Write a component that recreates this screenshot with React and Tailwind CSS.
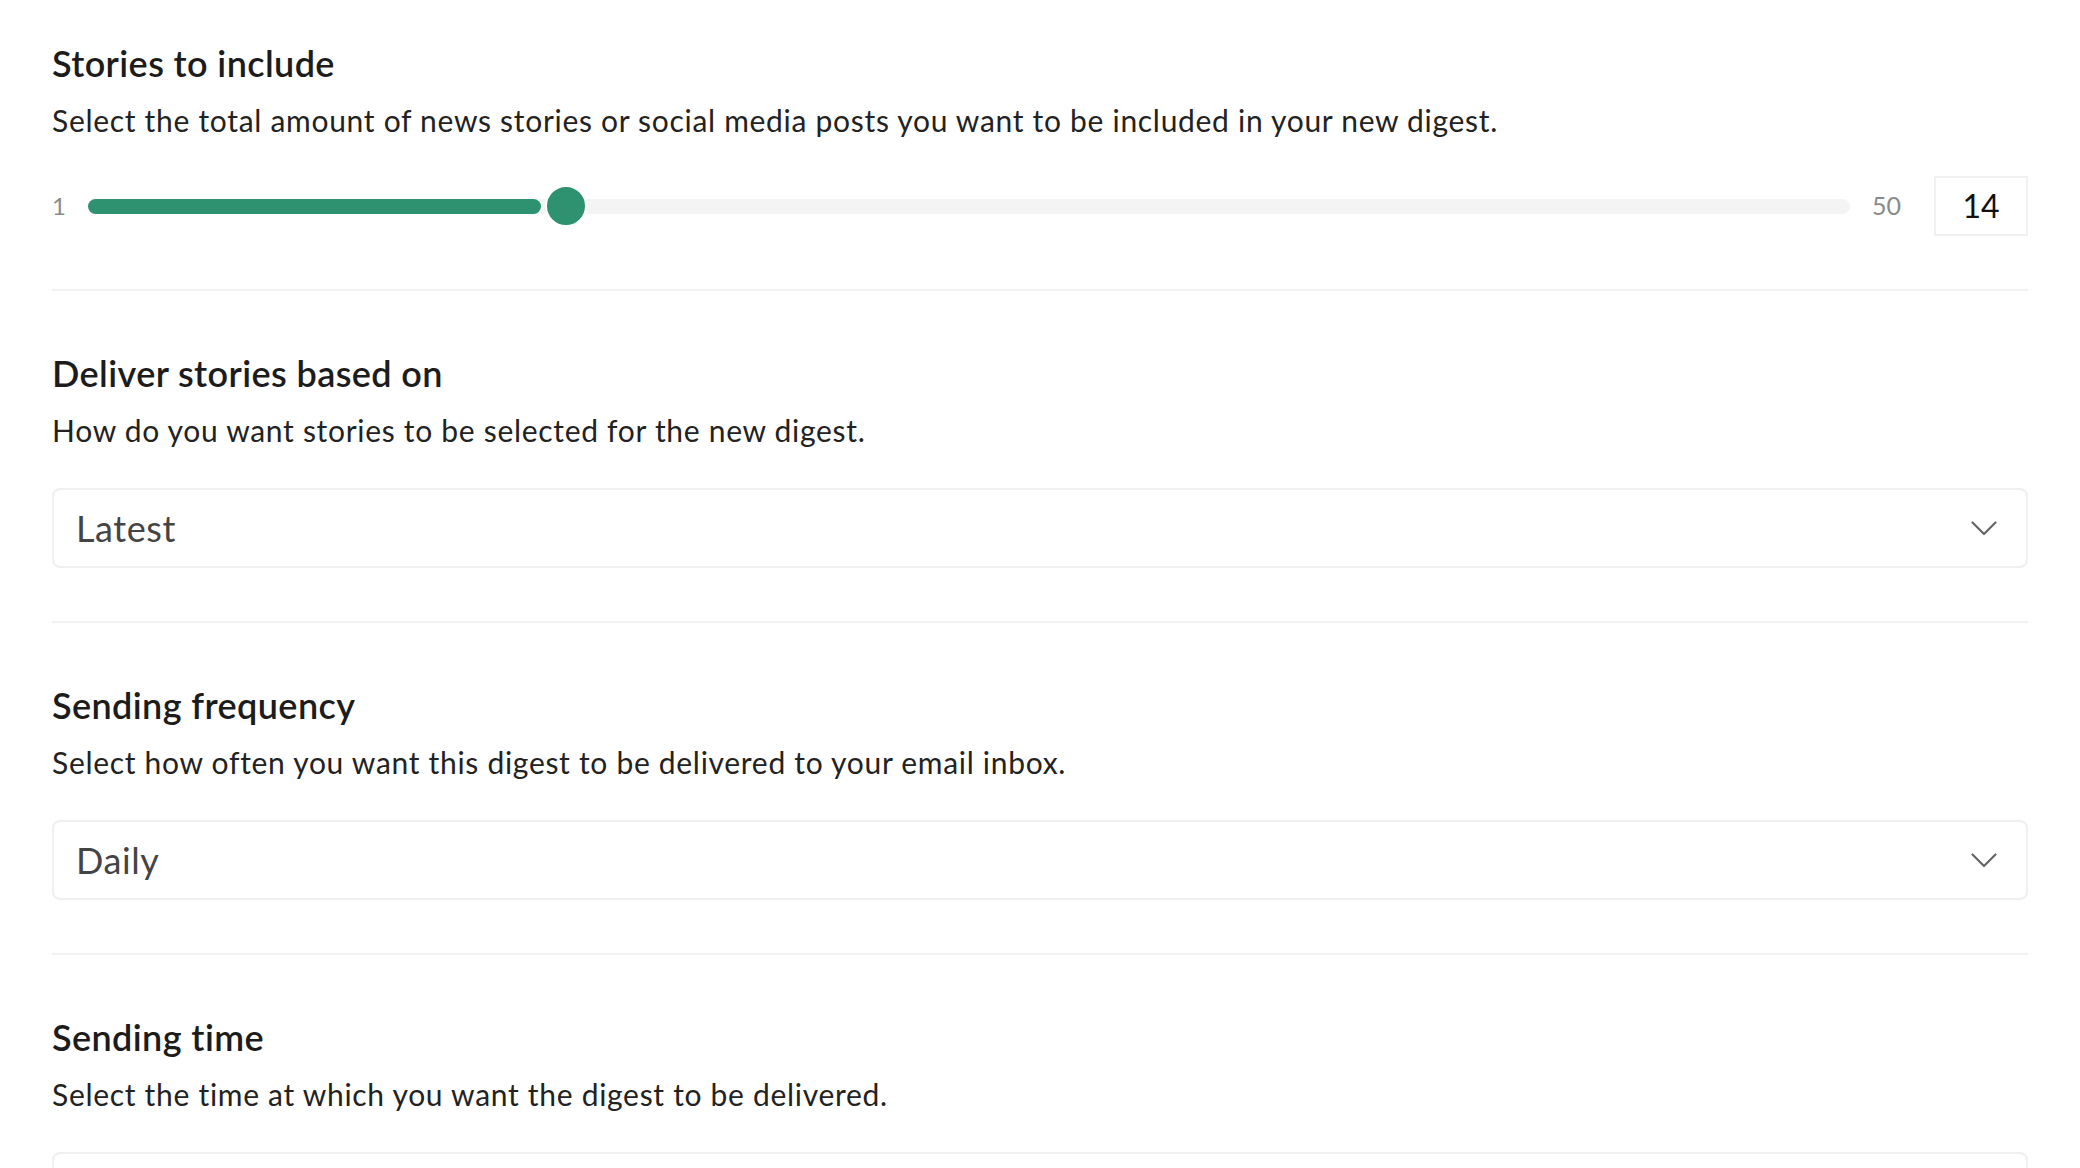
import React, { useState } from 'react';

const font = { fontFamily: 'Lato, "Noto Sans", sans-serif' };

const Chevron = () => (
  <svg width="26" height="15" viewBox="0 0 26 15" fill="none" className="text-[#666]">
    <polyline points="1.5,1.5 13,13 24.5,1.5" stroke="currentColor" strokeWidth="2.2" strokeLinecap="round" strokeLinejoin="round" />
  </svg>
);

const Section = ({ title, description, first, children }) => (
  <section className={`${first ? 'pt-[41px]' : 'pt-[60px]'} pb-[53px] border-b-2 border-[#f2f2f2]`}>
    <h2 className="text-[36px] leading-[44px] font-semibold tracking-[0.4px] text-[#1c1c1c]">{title}</h2>
    <p className="mt-[15px] text-[30px] leading-[40px] tracking-[0.7px] text-[#222]">{description}</p>
    <div className={first ? 'mt-[36px]' : 'mt-[38px]'}>{children}</div>
  </section>
);

const SelectBox = ({ value }) => (
  <div className="h-[80px] w-full rounded-lg border-2 border-[#f0f0f0] bg-white flex items-center justify-between pl-[22px] pr-[29px]">
    <span className="text-[36px] leading-none tracking-[0.6px] text-[#444]">{value}</span>
    <Chevron />
  </div>
);

const App = () => {
  const [count] = useState(14);
  const min = 1;
  const max = 50;
  const pct = ((count - min) / (max - min)) * 100;

  return (
    <div className="min-h-screen bg-white px-[52px]" style={font}>
      <Section
        first
        title="Stories to include"
        description="Select the total amount of news stories or social media posts you want to be included in your new digest."
      >
        <div className="flex items-center h-[60px]">
          <span className="w-[36px] text-[24px] text-[#8a8a8a]">1</span>
          <div className="relative flex-1 h-[15px] rounded-full bg-[#f4f4f4]">
            <div className="absolute left-0 top-0 h-full rounded-full bg-[#2e9170]" style={{ width: `calc(${pct}% - 14px)` }} />
            <div
              className="absolute top-1/2 w-[42px] h-[42px] -translate-x-1/2 -translate-y-1/2 rounded-full bg-[#2e9170] border-2 border-white"
              style={{ left: `calc(${pct}% + 11px)` }}
            />
          </div>
          <span className="ml-[22px] text-[25px] text-[#8a8a8a]">50</span>
          <div className="ml-[33px] w-[94px] h-[60px] border-2 border-[#f0f0f0] flex items-center justify-center text-[32px] text-[#111]">
            {count}
          </div>
        </div>
      </Section>

      <Section title="Deliver stories based on" description="How do you want stories to be selected for the new digest.">
        <SelectBox value="Latest" />
      </Section>

      <Section title="Sending frequency" description="Select how often you want this digest to be delivered to your email inbox.">
        <SelectBox value="Daily" />
      </Section>

      <Section title="Sending time" description="Select the time at which you want the digest to be delivered.">
        <SelectBox value="" />
      </Section>
    </div>
  );
};

export default App;
